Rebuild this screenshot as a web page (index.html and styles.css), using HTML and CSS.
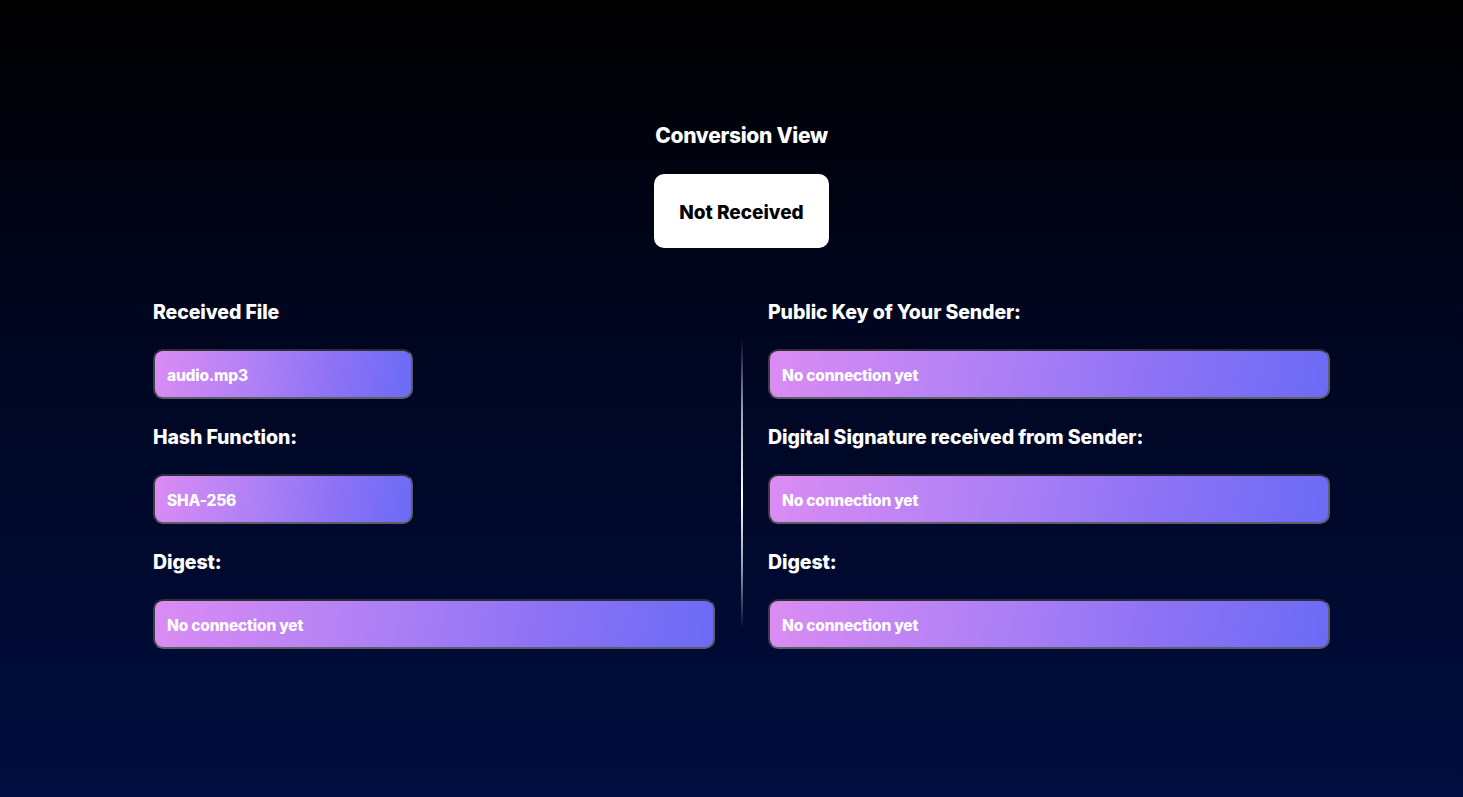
FILE: index.html
```html
<!DOCTYPE html>
<html lang="en">
<head>
<meta charset="utf-8">
<title>Conversion View</title>
<link rel="stylesheet" href="styles.css">
</head>
<body>
<main class="page">
  <h1 class="title">Conversion View</h1>
  <div class="status">Not Received</div>
  <section class="panels">
    <div class="column">
      <div class="label">Received File</div>
      <div class="field field-short">audio.mp3</div>
      <div class="label">Hash Function:</div>
      <div class="field field-short">SHA-256</div>
      <div class="label">Digest:</div>
      <div class="field">No connection yet</div>
    </div>
    <div class="divider"><span class="line"></span></div>
    <div class="column">
      <div class="label">Public Key of Your Sender:</div>
      <div class="field">No connection yet</div>
      <div class="label">Digital Signature received from Sender:</div>
      <div class="field">No connection yet</div>
      <div class="label">Digest:</div>
      <div class="field">No connection yet</div>
    </div>
  </section>
</main>
</body>
</html>
```
FILE: styles.css
```css
html, body {
  margin: 0;
  height: 100%;
}
body {
  background: linear-gradient(to bottom, #000000 0%, #00061f 40%, #000d3e 100%);
  font-family: "Inter", "Lato", "Liberation Sans", sans-serif;
  color: #ffffff;
  overflow: hidden;
}
.page {
  display: flex;
  flex-direction: column;
  align-items: center;
  padding-top: 123px;
  padding-left: 20px;
}
.title {
  margin: 0;
  font-size: 21px;
  line-height: 26px;
  font-weight: 800;
  letter-spacing: -0.3px;
}
.status {
  margin-top: 25px;
  width: 175px;
  height: 74px;
  box-sizing: border-box;
  background: #ffffff;
  color: #000000;
  border-radius: 10px;
  display: flex;
  align-items: center;
  justify-content: center;
  padding-top: 2px;
  font-size: 19px;
  font-weight: 800;
  letter-spacing: 0;
}
.panels {
  margin-top: 52px;
  display: flex;
  align-items: flex-start;
}
.column {
  width: 562px;
  display: flex;
  flex-direction: column;
  align-items: flex-start;
}
.label {
  font-size: 19.5px;
  line-height: 24px;
  font-weight: 800;
  letter-spacing: -0.1px;
  margin-bottom: 25px;
}
.field {
  box-sizing: border-box;
  width: 562px;
  height: 50px;
  border: 2px solid #5e5e66;
  border-top-color: #2e2e36;
  border-left-color: #3e3e46;
  border-radius: 10px;
  background: linear-gradient(100deg, #db8cf3 0%, #ae80f5 40%, #8c72f5 70%, #6b6bf6 100%);
  display: flex;
  align-items: center;
  padding: 3px 0 0 12px;
  font-size: 15.5px;
  font-weight: 800;
  letter-spacing: -0.2px;
  margin-bottom: 26px;
}
.field-short {
  width: 260px;
}
.divider {
  width: 53px;
  display: flex;
  justify-content: center;
  padding-top: 38px;
}
.line {
  display: block;
  width: 2px;
  height: 290px;
  background: linear-gradient(to bottom, rgba(255,255,255,0) 0%, rgba(210,210,230,0.75) 25%, rgba(255,255,255,1) 55%, rgba(210,210,230,0.7) 80%, rgba(255,255,255,0) 100%);
}
```
